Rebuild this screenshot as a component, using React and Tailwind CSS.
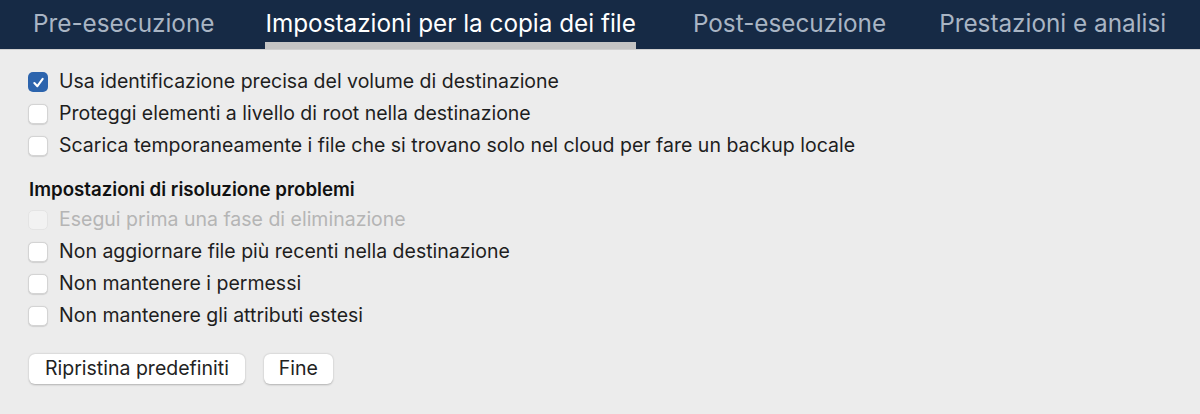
import React from "react";

const font = { fontFamily: "Inter, 'Noto Sans', sans-serif" };

function Check({ checked, disabled }) {
  if (checked) {
    return (
      <span className="flex h-[20px] w-[20px] shrink-0 items-center justify-center rounded-[5px] bg-[#2c64ad]">
        <svg width="13" height="13" viewBox="0 0 14 14" fill="none">
          <path d="M2.5 7.5 L5.8 11 L11.5 3" stroke="white" strokeWidth="2.2" strokeLinecap="round" strokeLinejoin="round" />
        </svg>
      </span>
    );
  }
  return (
    <span
      className={
        "h-[20px] w-[20px] shrink-0 rounded-[5px] border " +
        (disabled ? "border-[#e4e4e4] bg-[#f2f2f2]" : "border-[#d4d4d4] bg-white shadow-[0_0.5px_1px_rgba(0,0,0,0.12)]")
      }
    />
  );
}

function Row({ label, checked, disabled }) {
  return (
    <div className="flex h-[32px] items-center gap-[11px]">
      <Check checked={checked} disabled={disabled} />
      <span className={"text-[19.5px] " + (disabled ? "text-[#b5b5b5]" : "text-[#1e1e1e]")}>{label}</span>
    </div>
  );
}

export default function App() {
  const tabs = [
    { label: "Pre-esecuzione", cls: "mr-[51px] text-[#a9b5c4]" },
    { label: "Impostazioni per la copia dei file", cls: "mr-[57px] border-b-[7px] border-[#c4c4c4] text-white" },
    { label: "Post-esecuzione", cls: "mr-[53px] text-[#a9b5c4]" },
    { label: "Prestazioni e analisi", cls: "text-[#a9b5c4]" },
  ];
  return (
    <div className="h-[414px] w-[1200px] overflow-hidden bg-[#ececec]" style={font}>
      <div className="flex h-[49px] items-stretch bg-[#162a45] pl-[33px]">
        {tabs.map((t, i) => (
          <div key={i} className={"flex items-start pt-[5px] text-[24.3px] " + t.cls}>
            {t.label}
          </div>
        ))}
      </div>
      <div className="border-t border-[#d0d0d0] px-[28px] pt-[16px]">
        <Row label="Usa identificazione precisa del volume di destinazione" checked />
        <Row label="Proteggi elementi a livello di root nella destinazione" />
        <Row label="Scarica temporaneamente i file che si trovano solo nel cloud per fare un backup locale" />
        <div className="mt-[14px] flex h-[28px] items-center pl-[1px] text-[18.7px] font-semibold text-[#111]">
          Impostazioni di risoluzione problemi
        </div>
        <Row label="Esegui prima una fase di eliminazione" disabled />
        <Row label="Non aggiornare file più recenti nella destinazione" />
        <Row label="Non mantenere i permessi" />
        <Row label="Non mantenere gli attributi estesi" />
        <div className="mt-[22px] flex gap-[19px] pl-[1px]">
          <button className="h-[30px] rounded-[6px] bg-white px-[16px] text-[19.5px] text-[#222] shadow-[0_0.5px_2px_rgba(0,0,0,0.25)]">
            Ripristina predefiniti
          </button>
          <button className="h-[30px] rounded-[6px] bg-white px-[15px] text-[19.5px] text-[#222] shadow-[0_0.5px_2px_rgba(0,0,0,0.25)]">
            Fine
          </button>
        </div>
      </div>
    </div>
  );
}
